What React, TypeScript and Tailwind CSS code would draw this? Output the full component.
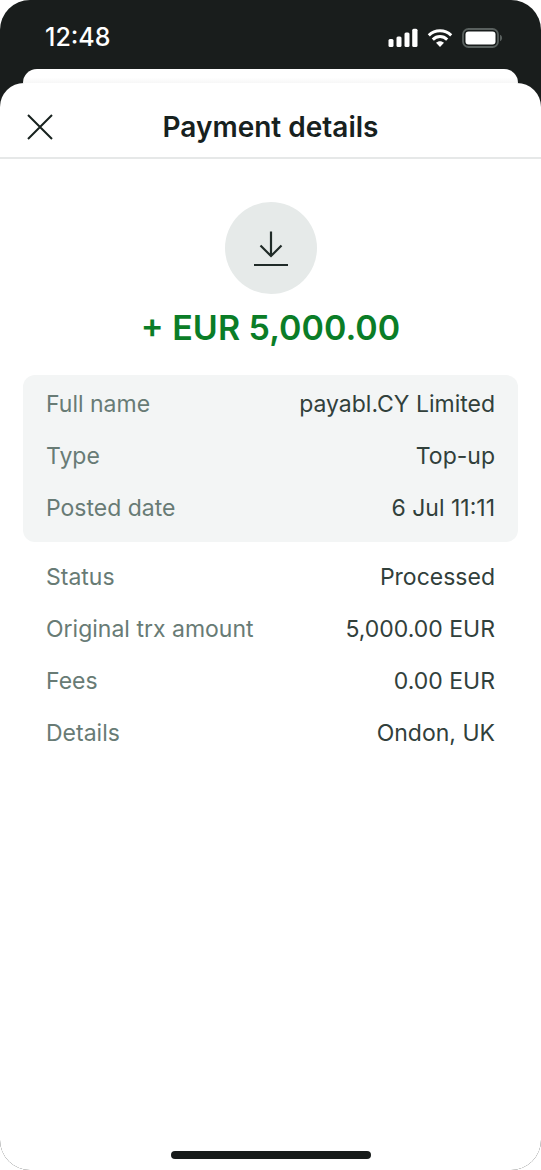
type Detail = { label: string; value: string };

const summary: Detail[] = [
  { label: "Full name", value: "payabl.CY Limited" },
  { label: "Type", value: "Top-up" },
  { label: "Posted date", value: "6 Jul 11:11" },
];

const transaction: Detail[] = [
  { label: "Status", value: "Processed" },
  { label: "Original trx amount", value: "5,000.00 EUR" },
  { label: "Fees", value: "0.00 EUR" },
  { label: "Details", value: "Ondon, UK" },
];

const SignalIcon = () => (
  <svg width="30" height="20" viewBox="0 0 30 20" fill="#fff" aria-hidden="true">
    <rect x="0.5" y="11" width="5" height="8" rx="1.5" />
    <rect x="8.5" y="8.5" width="5" height="10.5" rx="1.5" />
    <rect x="16.5" y="4.5" width="5" height="14.5" rx="1.5" />
    <rect x="24.2" y="0.8" width="5.3" height="18.2" rx="1.5" />
  </svg>
);

const WifiIcon = () => (
  <svg width="26" height="20" viewBox="0 0 26 20" aria-hidden="true">
    <g fill="none" stroke="#fff" strokeWidth="3">
      <path d="M1.8 7.4C8.1 1.2 17.9 1.2 24.2 7.4" />
      <path d="M5.8 11.6C9.9 7.6 16.1 7.6 20.2 11.6" />
    </g>
    <path d="M9 14.8C11.2 12.6 14.8 12.6 17 14.8L13 19Z" fill="#fff" />
  </svg>
);

const BatteryIcon = () => (
  <svg width="41" height="20" viewBox="0 0 41 20" aria-hidden="true">
    <rect x="1" y="1" width="35" height="18" rx="5.5" fill="none" stroke="#59605e" strokeWidth="1.8" />
    <rect x="3.5" y="3.5" width="30" height="13" rx="3" fill="#fff" />
    <path d="M38 6.8C40.8 7.8 40.8 12.2 38 13.2Z" fill="#59605e" />
  </svg>
);

const CloseIcon = () => (
  <svg width="26" height="26" viewBox="0 0 26 26" fill="none" stroke="#17211e" strokeWidth="2" aria-hidden="true">
    <path d="M1 1L25 25M25 1L1 25" />
  </svg>
);

const DownloadIcon = () => (
  <svg width="36" height="38" viewBox="0 0 36 38" fill="none" stroke="#202b28" strokeWidth="2.2" aria-hidden="true">
    <path d="M18 2.5V27M7.5 16.5L18 27L28.5 16.5" />
    <path d="M1 36H35" />
  </svg>
);

const DetailList = ({ items, className }: { items: Detail[]; className: string }) => (
  <dl className={`flex flex-col gap-6 px-[23px] text-[23px] leading-7 ${className}`}>
    {items.map(({ label, value }) => (
      <div key={label} className="flex items-center justify-between gap-4">
        <dt className="text-[#687b75]">{label}</dt>
        <dd className="text-right text-[#31403b]">{value}</dd>
      </div>
    ))}
  </dl>
);

const StatusBar = () => (
  <div className="flex h-[69px] items-center justify-between pb-1.5 pt-3 pl-[45px] pr-[38px] text-white">
    <span className="text-[25px] font-medium">12:48</span>
    <div className="flex items-center gap-[9px]">
      <SignalIcon />
      <div className="flex items-center gap-[9px]">
        <WifiIcon />
        <BatteryIcon />
      </div>
    </div>
  </div>
);

const App = () => (
  <div className="bg-white font-['Inter','Liberation_Sans',sans-serif]">
    <div className="flex min-h-screen flex-col rounded-[30px] bg-[#191d1c]">
      <StatusBar />
      <div className="mx-[23px] h-[14px] rounded-t-[14px] bg-linear-to-b from-white from-60% to-[#f7f7f7]" />

      <div className="flex flex-1 flex-col rounded-t-3xl rounded-b-[30px] bg-white">
        <header className="grid h-[76px] grid-cols-[80px_1fr_80px] items-center border-b-2 border-[#e6e8e8] pt-3.5">
          <button type="button" aria-label="Close" className="flex h-11 items-center justify-center">
            <CloseIcon />
          </button>
          <h1 className="text-center text-[28px] font-semibold leading-8 text-[#17211e]">Payment details</h1>
        </header>

        <main className="flex flex-1 flex-col px-[23px] pt-[43px]">
          <div className="flex size-[92px] items-center justify-center self-center rounded-full bg-[#e6eae9]">
            <DownloadIcon />
          </div>
          <p className="mt-4 text-center text-[34px] font-semibold leading-9 text-[#0a7d27]">+ EUR 5,000.00</p>

          <DetailList items={summary} className="mt-[29px] rounded-xl bg-[#f3f5f5] pt-[15px] pb-5" />
          <DetailList items={transaction} className="pt-[21px]" />
        </main>

        <div className="mb-[11px] h-2 w-[200px] self-center rounded-full bg-[#171b1a]" />
      </div>
    </div>
  </div>
);

export default App;
